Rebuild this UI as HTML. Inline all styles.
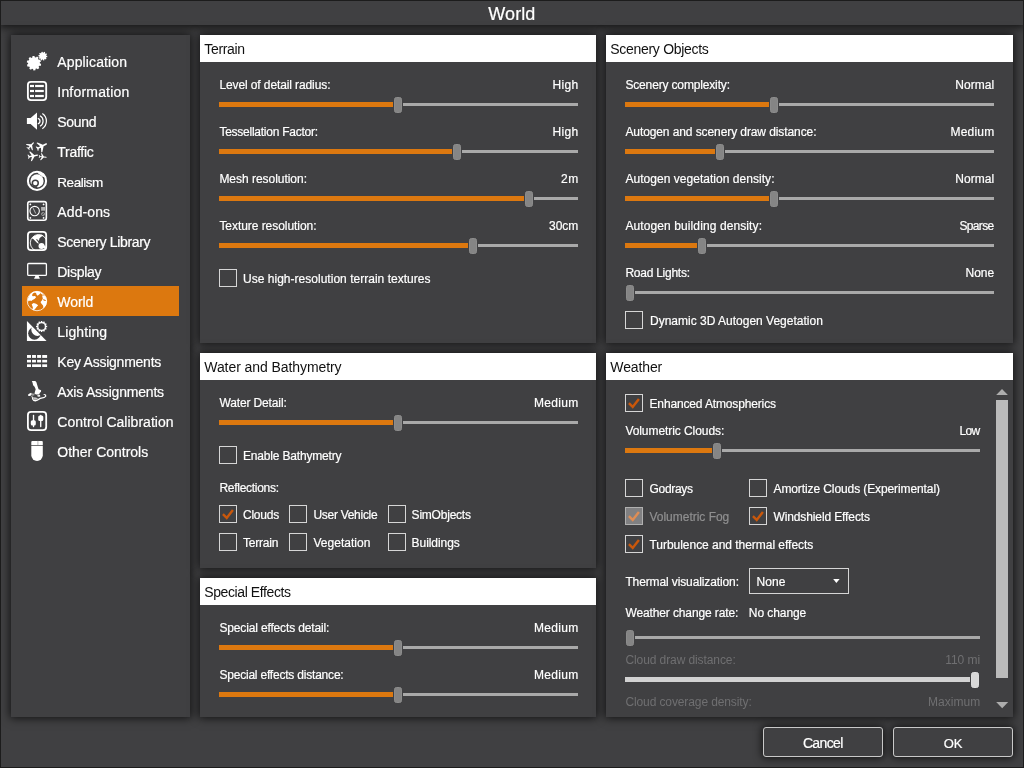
<!DOCTYPE html>
<html><head><meta charset="utf-8"><title>World</title><style>
html,body{margin:0;padding:0;background:#404042;overflow:hidden}
body{width:1024px;height:768px;position:relative;font-family:"Liberation Sans",sans-serif}
#win{position:absolute;left:0;top:0;width:1024px;height:768px;box-sizing:border-box;border:1px solid #1c1c1c;pointer-events:none;z-index:50}
.titlebar{position:absolute;left:1px;top:1px;width:1022px;height:24px;background:#404042;box-shadow:0 0 10px 2px rgba(0,0,0,.75)}
.panel{position:absolute;background:#404042;box-shadow:0 0 9px 1px rgba(0,0,0,.75)}
.hdr{position:absolute;left:0;top:0;right:0;height:27px;background:#fff}
#txt{position:absolute;left:0;top:0;width:1024px;height:768px;will-change:transform}
.t{position:absolute;white-space:pre;-webkit-text-stroke:0.2px currentColor}
.btn{position:absolute;width:120px;height:30px;box-sizing:border-box;border:1px solid #c9c9c9;border-radius:3px;background:#404042;box-shadow:0 0 9px 1px rgba(0,0,0,.72)}
</style></head><body>
<div class="titlebar"></div>
<div class="panel" style="left:11px;top:35px;width:179px;height:682px"></div>
<div style="position:absolute;left:22px;top:286px;width:157px;height:30px;background:#dc780f"></div>
<div class="panel" style="left:200px;top:35px;width:396px;height:308px"><div class="hdr"></div></div>
<div style="position:absolute;left:219px;top:102.0px;width:174px;height:5px;background:#dc780f"></div>
<div style="position:absolute;left:403px;top:103.0px;width:175px;height:3px;background:#a9a9a9"></div>
<div style="position:absolute;left:394px;top:97.0px;width:8px;height:16px;box-sizing:border-box;background:#858585;border:1px solid #8c8c8c;border-radius:2.5px"></div>
<div style="position:absolute;left:219px;top:149.0px;width:233px;height:5px;background:#dc780f"></div>
<div style="position:absolute;left:462px;top:150.0px;width:116px;height:3px;background:#a9a9a9"></div>
<div style="position:absolute;left:453px;top:144.0px;width:8px;height:16px;box-sizing:border-box;background:#858585;border:1px solid #8c8c8c;border-radius:2.5px"></div>
<div style="position:absolute;left:219px;top:196.0px;width:305px;height:5px;background:#dc780f"></div>
<div style="position:absolute;left:534px;top:197.0px;width:44px;height:3px;background:#a9a9a9"></div>
<div style="position:absolute;left:525px;top:191.0px;width:8px;height:16px;box-sizing:border-box;background:#858585;border:1px solid #8c8c8c;border-radius:2.5px"></div>
<div style="position:absolute;left:219px;top:243.0px;width:249px;height:5px;background:#dc780f"></div>
<div style="position:absolute;left:478px;top:244.0px;width:100px;height:3px;background:#a9a9a9"></div>
<div style="position:absolute;left:469px;top:238.0px;width:8px;height:16px;box-sizing:border-box;background:#858585;border:1px solid #8c8c8c;border-radius:2.5px"></div>
<div style="position:absolute;left:219px;top:269px;width:18px;height:18px;box-sizing:border-box;border:1px solid #d6d6d6;background:transparent"></div>
<div class="panel" style="left:200px;top:353px;width:396px;height:215px"><div class="hdr"></div></div>
<div style="position:absolute;left:219px;top:420.0px;width:174px;height:5px;background:#dc780f"></div>
<div style="position:absolute;left:403px;top:421.0px;width:175px;height:3px;background:#a9a9a9"></div>
<div style="position:absolute;left:394px;top:415.0px;width:8px;height:16px;box-sizing:border-box;background:#858585;border:1px solid #8c8c8c;border-radius:2.5px"></div>
<div style="position:absolute;left:219px;top:446px;width:18px;height:18px;box-sizing:border-box;border:1px solid #d6d6d6;background:transparent"></div>
<div style="position:absolute;left:219px;top:505px;width:18px;height:18px;box-sizing:border-box;border:1px solid #d6d6d6;background:transparent"><svg width="16" height="16" viewBox="1 1 16 16" style="position:absolute;left:0;top:0"><path d="M3.9 9.2 L7.7 12.9 L13.9 4.9" fill="none" stroke="#c9570b" stroke-width="2.45" stroke-linejoin="miter"/></svg></div>
<div style="position:absolute;left:289px;top:505px;width:18px;height:18px;box-sizing:border-box;border:1px solid #d6d6d6;background:transparent"></div>
<div style="position:absolute;left:388px;top:505px;width:18px;height:18px;box-sizing:border-box;border:1px solid #d6d6d6;background:transparent"></div>
<div style="position:absolute;left:219px;top:533px;width:18px;height:18px;box-sizing:border-box;border:1px solid #d6d6d6;background:transparent"></div>
<div style="position:absolute;left:289px;top:533px;width:18px;height:18px;box-sizing:border-box;border:1px solid #d6d6d6;background:transparent"></div>
<div style="position:absolute;left:388px;top:533px;width:18px;height:18px;box-sizing:border-box;border:1px solid #d6d6d6;background:transparent"></div>
<div class="panel" style="left:200px;top:578px;width:396px;height:139px"><div class="hdr"></div></div>
<div style="position:absolute;left:219px;top:645.0px;width:174px;height:5px;background:#dc780f"></div>
<div style="position:absolute;left:403px;top:646.0px;width:175px;height:3px;background:#a9a9a9"></div>
<div style="position:absolute;left:394px;top:640.0px;width:8px;height:16px;box-sizing:border-box;background:#858585;border:1px solid #8c8c8c;border-radius:2.5px"></div>
<div style="position:absolute;left:219px;top:692.0px;width:174px;height:5px;background:#dc780f"></div>
<div style="position:absolute;left:403px;top:693.0px;width:175px;height:3px;background:#a9a9a9"></div>
<div style="position:absolute;left:394px;top:687.0px;width:8px;height:16px;box-sizing:border-box;background:#858585;border:1px solid #8c8c8c;border-radius:2.5px"></div>
<div class="panel" style="left:606px;top:35px;width:407px;height:308px"><div class="hdr"></div></div>
<div style="position:absolute;left:625px;top:102.0px;width:144px;height:5px;background:#dc780f"></div>
<div style="position:absolute;left:779px;top:103.0px;width:215px;height:3px;background:#a9a9a9"></div>
<div style="position:absolute;left:770px;top:97.0px;width:8px;height:16px;box-sizing:border-box;background:#858585;border:1px solid #8c8c8c;border-radius:2.5px"></div>
<div style="position:absolute;left:625px;top:149.0px;width:90px;height:5px;background:#dc780f"></div>
<div style="position:absolute;left:725px;top:150.0px;width:269px;height:3px;background:#a9a9a9"></div>
<div style="position:absolute;left:716px;top:144.0px;width:8px;height:16px;box-sizing:border-box;background:#858585;border:1px solid #8c8c8c;border-radius:2.5px"></div>
<div style="position:absolute;left:625px;top:196.0px;width:144px;height:5px;background:#dc780f"></div>
<div style="position:absolute;left:779px;top:197.0px;width:215px;height:3px;background:#a9a9a9"></div>
<div style="position:absolute;left:770px;top:191.0px;width:8px;height:16px;box-sizing:border-box;background:#858585;border:1px solid #8c8c8c;border-radius:2.5px"></div>
<div style="position:absolute;left:625px;top:243.0px;width:72px;height:5px;background:#dc780f"></div>
<div style="position:absolute;left:707px;top:244.0px;width:287px;height:3px;background:#a9a9a9"></div>
<div style="position:absolute;left:698px;top:238.0px;width:8px;height:16px;box-sizing:border-box;background:#858585;border:1px solid #8c8c8c;border-radius:2.5px"></div>
<div style="position:absolute;left:635px;top:291.0px;width:359px;height:3px;background:#a9a9a9"></div>
<div style="position:absolute;left:626px;top:285.0px;width:8px;height:16px;box-sizing:border-box;background:#858585;border:1px solid #8c8c8c;border-radius:2.5px"></div>
<div style="position:absolute;left:625px;top:311px;width:18px;height:18px;box-sizing:border-box;border:1px solid #d6d6d6;background:transparent"></div>
<div class="panel" style="left:606px;top:353px;width:407px;height:364px"><div class="hdr"></div></div>
<div style="position:absolute;left:625px;top:394px;width:18px;height:18px;box-sizing:border-box;border:1px solid #d6d6d6;background:transparent"><svg width="16" height="16" viewBox="1 1 16 16" style="position:absolute;left:0;top:0"><path d="M3.9 9.2 L7.7 12.9 L13.9 4.9" fill="none" stroke="#c9570b" stroke-width="2.45" stroke-linejoin="miter"/></svg></div>
<div style="position:absolute;left:625px;top:448.0px;width:87px;height:5px;background:#dc780f"></div>
<div style="position:absolute;left:722px;top:449.0px;width:258px;height:3px;background:#a9a9a9"></div>
<div style="position:absolute;left:713px;top:443.0px;width:8px;height:16px;box-sizing:border-box;background:#858585;border:1px solid #8c8c8c;border-radius:2.5px"></div>
<div style="position:absolute;left:625px;top:479px;width:18px;height:18px;box-sizing:border-box;border:1px solid #d6d6d6;background:transparent"></div>
<div style="position:absolute;left:749px;top:479px;width:18px;height:18px;box-sizing:border-box;border:1px solid #d6d6d6;background:transparent"></div>
<div style="position:absolute;left:625px;top:507px;width:18px;height:18px;box-sizing:border-box;border:1px solid #b0b0b0;background:#808082"><svg width="16" height="16" viewBox="1 1 16 16" style="position:absolute;left:0;top:0"><path d="M3.9 9.2 L7.7 12.9 L13.9 4.9" fill="none" stroke="#de8d55" stroke-width="2.45" stroke-linejoin="miter"/></svg></div>
<div style="position:absolute;left:749px;top:507px;width:18px;height:18px;box-sizing:border-box;border:1px solid #d6d6d6;background:transparent"><svg width="16" height="16" viewBox="1 1 16 16" style="position:absolute;left:0;top:0"><path d="M3.9 9.2 L7.7 12.9 L13.9 4.9" fill="none" stroke="#c9570b" stroke-width="2.45" stroke-linejoin="miter"/></svg></div>
<div style="position:absolute;left:625px;top:535px;width:18px;height:18px;box-sizing:border-box;border:1px solid #d6d6d6;background:transparent"><svg width="16" height="16" viewBox="1 1 16 16" style="position:absolute;left:0;top:0"><path d="M3.9 9.2 L7.7 12.9 L13.9 4.9" fill="none" stroke="#c9570b" stroke-width="2.45" stroke-linejoin="miter"/></svg></div>
<div style="position:absolute;left:749px;top:568px;width:100px;height:26px;box-sizing:border-box;border:1px solid #d6d6d6"></div>
<svg style="position:absolute;left:833px;top:579px" width="7" height="4" viewBox="0 0 7 4"><path d="M0.2 0H6.6L3.4 4Z" fill="#fff"/></svg>
<div style="position:absolute;left:635px;top:636.0px;width:345px;height:3px;background:#a9a9a9"></div>
<div style="position:absolute;left:626px;top:630.0px;width:8px;height:16px;box-sizing:border-box;background:#858585;border:1px solid #8c8c8c;border-radius:2.5px"></div>
<div style="position:absolute;left:625px;top:677.0px;width:345px;height:5px;background:#d2d2d2"></div>
<div style="position:absolute;left:971px;top:672.0px;width:8px;height:16px;box-sizing:border-box;background:#d8d8d8;border:1px solid #dddddd;border-radius:2.5px"></div>
<div style="position:absolute;left:996px;top:400px;width:12px;height:278px;background:#bbbbbb"></div>
<svg style="position:absolute;left:996px;top:389px" width="12" height="7" viewBox="0 0 12 7"><path d="M0.2 6L6 0L11.9 6Z" fill="#adadad"/></svg>
<svg style="position:absolute;left:996px;top:702px" width="13" height="7" viewBox="0 0 13 7"><path d="M0.2 0L6.2 6.2L12.2 0Z" fill="#adadad"/></svg>
<div class="btn" style="left:763px;top:727px"></div>
<div class="btn" style="left:893px;top:727px"></div>
<svg style="position:absolute;left:0;top:0" width="200" height="480" viewBox="0 0 200 480"><path d="M39.85 63.36 L41.15 63.96 L40.66 65.89 L39.23 65.79 L38.59 66.79 L39.30 68.04 L37.77 69.31 L36.67 68.39 L35.57 68.82 L35.41 70.25 L33.41 70.38 L33.07 68.98 L31.92 68.69 L30.95 69.75 L29.27 68.68 L29.81 67.35 L29.05 66.44 L27.65 66.73 L26.91 64.87 L28.13 64.12 L28.05 62.94 L26.75 62.34 L27.24 60.41 L28.67 60.51 L29.31 59.51 L28.60 58.26 L30.13 56.99 L31.23 57.91 L32.33 57.48 L32.49 56.05 L34.49 55.92 L34.83 57.32 L35.98 57.61 L36.95 56.55 L38.63 57.62 L38.09 58.95 L38.85 59.86 L40.25 59.57 L40.99 61.43 L39.77 62.18Z" fill="#ffffff"/>
<path d="M46.33 55.70 L47.30 55.93 L47.17 57.15 L46.18 57.18 L45.90 57.82 L46.55 58.58 L45.73 59.49 L44.91 58.93 L44.30 59.28 L44.39 60.28 L43.19 60.54 L42.85 59.60 L42.15 59.53 L41.64 60.38 L40.51 59.89 L40.79 58.93 L40.27 58.47 L39.35 58.85 L38.73 57.79 L39.52 57.18 L39.37 56.50 L38.40 56.27 L38.53 55.05 L39.52 55.02 L39.80 54.38 L39.15 53.62 L39.97 52.71 L40.79 53.27 L41.40 52.92 L41.31 51.92 L42.51 51.66 L42.85 52.60 L43.55 52.67 L44.06 51.82 L45.19 52.31 L44.91 53.27 L45.43 53.73 L46.35 53.35 L46.97 54.41 L46.18 55.02Z" fill="#ffffff" stroke="#404042" stroke-width="0.7" paint-order="stroke"/>
<rect x="27.9" y="81.8" width="18.3" height="18.3" rx="3.0" fill="none" stroke="#ffffff" stroke-width="1.85"/>
<rect x="30" y="84.9" width="4" height="2.2" fill="#ffffff"/>
<rect x="35.1" y="84.9" width="8.7" height="2.2" fill="#ffffff"/>
<rect x="30" y="89.9" width="4" height="2.2" fill="#ffffff"/>
<rect x="35.1" y="89.9" width="8.7" height="2.2" fill="#ffffff"/>
<rect x="30" y="94.9" width="4" height="2.2" fill="#ffffff"/>
<rect x="35.1" y="94.9" width="8.7" height="2.2" fill="#ffffff"/>
<path d="M26.90 118.00 L30.60 118.00 L37.00 112.40 L37.00 129.70 L30.60 124.10 L26.90 124.10Z" fill="#ffffff" />
<path d="M37.78 118.31 A2.8 2.8 0 0 1 37.78 123.79" fill="none" stroke="#ffffff" stroke-width="1.3"/>
<path d="M39.97 115.84 A5.9 5.9 0 0 1 39.97 126.26" fill="none" stroke="#ffffff" stroke-width="1.2"/>
<path d="M42.34 113.42 A9.2 9.2 0 0 1 42.34 128.68" fill="none" stroke="#ffffff" stroke-width="1.2"/>
<path d="M33.84 142.33 L33.81 143.25 L32.11 145.26 L32.84 149.72 L32.20 150.44 L30.58 146.97 L29.30 148.19 L29.56 149.84 L29.21 150.24 L28.13 148.67 L26.46 147.76 L26.82 147.37 L28.49 147.46 L29.58 146.07 L25.95 144.82 L26.60 144.10 L31.11 144.37 L32.94 142.46Z" fill="#ffffff" />
<path d="M47.08 143.61 L46.60 144.69 L43.60 146.33 L42.37 151.96 L41.26 152.53 L40.96 147.68 L38.86 148.57 L38.39 150.66 L37.78 150.97 L37.23 148.63 L35.66 146.81 L36.27 146.50 L38.23 147.35 L40.19 146.17 L36.45 143.08 L37.56 142.51 L42.83 144.82 L45.93 143.37Z" fill="#ffffff" />
<path d="M38.32 155.00 L37.62 155.82 L34.57 156.46 L32.00 161.09 L30.88 161.29 L31.90 156.92 L29.83 157.14 L28.86 158.85 L28.25 158.96 L28.39 156.75 L27.50 154.72 L28.11 154.61 L29.61 155.89 L31.63 155.38 L29.17 151.63 L30.30 151.44 L34.29 154.91 L37.38 154.47Z" fill="#ffffff" />
<path d="M46.77 157.38 L46.09 157.79 L43.76 157.57 L40.93 160.18 L40.07 160.08 L41.75 157.32 L40.21 157.03 L39.15 157.99 L38.69 157.93 L39.26 156.45 L39.06 154.88 L39.53 154.93 L40.32 156.13 L41.88 156.21 L40.93 153.13 L41.78 153.24 L43.90 156.46 L46.21 156.81Z" fill="#ffffff" />
<circle cx="37" cy="180.9" r="9.1" fill="none" stroke="#ffffff" stroke-width="2.1"/>
<circle cx="37.0" cy="180.95" r="6.6" fill="#ffffff"/>
<path d="M37.58 171.49 L43.44 173.25 L45.98 177.16 L42.66 176.77 L38.16 173.45Z" fill="#ffffff" />
<circle cx="35.3" cy="183.1" r="2.95" fill="none" stroke="#404042" stroke-width="1.5"/>
<path d="M29.57 183.41 L31.33 185.75 L32.89 187.31 L37.38 188.48 L37.19 186.34 L32.89 185.95 L31.52 183.80Z" fill="#404042" />
<rect x="27.75" y="201.6" width="18.6" height="18.6" rx="2.2" fill="none" stroke="#ffffff" stroke-width="1.6"/>
<path d="M29.25 204.4 L30.35 203.3 L31.450000000000003 204.4 L30.35 205.5Z" fill="#ffffff"/>
<path d="M42.5 204.4 L43.6 203.3 L44.7 204.4 L43.6 205.5Z" fill="#ffffff"/>
<path d="M29.25 217.9 L30.35 216.8 L31.450000000000003 217.9 L30.35 219.0Z" fill="#ffffff"/>
<path d="M42.5 217.9 L43.6 216.8 L44.7 217.9 L43.6 219.0Z" fill="#ffffff"/>
<circle cx="34.65" cy="211.05" r="4.7" fill="none" stroke="#ffffff" stroke-width="1.05"/>
<path d="M33.2 208.2 L35.7 213.5" stroke="#c8c8c8" stroke-width="0.9" fill="none"/>
<rect x="41.1" y="207" width="3.9" height="3.7" fill="#b4b4b4"/>
<circle cx="43.05" cy="214.05" r="1.55" fill="none" stroke="#a8a8a8" stroke-width="0.8"/>
<path d="M42.1 213.2 L44 214.9" stroke="#a0a0a0" stroke-width="0.7" fill="none"/>
<clipPath id="slc"><rect x="28" y="232" width="18" height="18" rx="2"/></clipPath>
<g clip-path="url(#slc)">
<circle cx="38.6" cy="242.9" r="8.3" fill="none" stroke="#ffffff" stroke-width="0.9"/>
<path d="M31.72 238.33 L34.06 235.98 L37.58 234.42 L41.88 234.81 L43.44 235.40 L41.29 236.77 L39.53 238.13 L38.95 240.67 L37.77 240.28 L36.99 238.72 L36.21 239.70 L37.38 241.06 L38.36 242.62 L38.75 243.80 L37.19 243.02 L35.23 241.06 L33.28 239.11Z" fill="#ffffff" />
<circle cx="41.5" cy="245.9" r="3.0" fill="#ffffff"/>
<circle cx="44.3" cy="246.9" r="1.3" fill="#ffffff"/>
</g>
<rect x="27.9" y="231.8" width="18.3" height="18.3" rx="3.2" fill="none" stroke="#ffffff" stroke-width="1.8"/>
<rect x="27.7" y="263.5" width="18.7" height="11.9" rx="1.0" fill="none" stroke="#ffffff" stroke-width="1.3"/>
<path d="M35.40 276.00 L38.70 276.00 L39.90 278.80 L34.00 278.80Z" fill="#ffffff" />
<circle cx="37" cy="301.05" r="9.7" fill="none" stroke="#ffffff" stroke-width="0.8"/>
<clipPath id="wc"><circle cx="37" cy="301.05" r="10"/></clipPath><g clip-path="url(#wc)">
<path d="M27.81 298.89 L28.79 296.55 L30.55 293.81 L32.89 291.86 L35.62 291.08 L39.14 291.27 L41.09 292.25 L39.53 294.20 L37.58 295.77 L36.60 294.79 L36.02 293.03 L34.65 292.45 L32.89 293.62 L31.91 295.18 L32.89 296.23 L35.04 295.96 L36.09 297.13 L34.45 298.89 L32.50 300.06 L31.33 301.04 L29.96 300.45 L28.40 301.43Z" fill="#ffffff" />
<path d="M31.72 304.36 L33.67 302.99 L36.02 303.77 L38.16 305.34 L36.60 307.09 L35.04 309.05 L33.67 310.22 L32.50 309.44 L32.89 307.29 L32.11 305.53Z" fill="#ffffff" />
<path d="M42.46 295.18 L44.22 295.38 L45.78 296.94 L46.95 299.28 L47.15 302.41 L46.17 305.14 L44.61 307.29 L43.44 308.27 L43.05 305.53 L41.29 303.58 L40.51 302.02 L41.88 300.45 L42.85 298.50 L42.27 296.55Z" fill="#ffffff" />
<path d="M43.05 299.28 L44.41 299.48 L45.98 300.26 L45.59 301.04 L44.22 300.65 L43.05 300.06Z" fill="#dc780f" />
<path d="M40.31 293.23 L41.88 292.84 L43.44 294.40 L42.46 294.79Z" fill="#ffffff" />
</g>
<path d="M26.95 321.10 L26.95 340.90 L46.60 340.90Z" fill="#ffffff" />
<clipPath id="lt"><path d="M26.95 321.1 L26.95 340.9 L46.6 340.9Z"/></clipPath>
<mask id="lm"><rect x="20" y="315" width="40" height="32" fill="#fff"/><circle cx="37.6" cy="329.6" r="6.3" fill="#000"/></mask>
<g clip-path="url(#lt)"><circle cx="34.45" cy="333.35" r="6.3" fill="#404042" mask="url(#lm)"/></g>
<path d="M46.03 325.70 L47.16 325.86 L47.16 327.14 L46.03 327.30 L45.83 328.02 L46.74 328.72 L46.10 329.84 L45.04 329.40 L44.50 329.94 L44.94 331.00 L43.82 331.64 L43.12 330.73 L42.40 330.93 L42.24 332.06 L40.96 332.06 L40.80 330.93 L40.08 330.73 L39.38 331.64 L38.26 331.00 L38.70 329.94 L38.16 329.40 L37.10 329.84 L36.46 328.72 L37.37 328.02 L37.17 327.30 L36.04 327.14 L36.04 325.86 L37.17 325.70 L37.37 324.98 L36.46 324.28 L37.10 323.16 L38.16 323.60 L38.70 323.06 L38.26 322.00 L39.38 321.36 L40.08 322.27 L40.80 322.07 L40.96 320.94 L42.24 320.94 L42.40 322.07 L43.12 322.27 L43.82 321.36 L44.94 322.00 L44.50 323.06 L45.04 323.60 L46.10 323.16 L46.74 324.28 L45.83 324.98Z M44.800000000000004 326.5 A3.2 3.2 0 1 0 38.4 326.5 A3.2 3.2 0 1 0 44.800000000000004 326.5Z" fill="#ffffff" fill-rule="evenodd"/>
<rect x="27" y="355.0" width="4.00" height="2.90" fill="#ffffff"/>
<rect x="32.05" y="355.0" width="3.90" height="2.90" fill="#ffffff"/>
<rect x="37.1" y="355.0" width="4.00" height="2.90" fill="#ffffff"/>
<rect x="42.2" y="355.0" width="4.90" height="2.90" fill="#ffffff"/>
<rect x="27" y="359.85" width="4.00" height="2.60" fill="#ffffff"/>
<rect x="32.05" y="359.85" width="3.90" height="2.60" fill="#ffffff"/>
<rect x="37.1" y="359.85" width="4.00" height="2.60" fill="#ffffff"/>
<rect x="42.2" y="359.85" width="4.90" height="2.60" fill="#ffffff"/>
<rect x="27" y="364.3" width="4.00" height="2.70" fill="#ffffff"/>
<rect x="32.05" y="364.3" width="9.05" height="2.70" fill="#ffffff"/>
<rect x="42.2" y="364.3" width="4.90" height="2.70" fill="#ffffff"/>
<path d="M31.84 381.10 L35.30 380.92 L36.40 382.37 L37.67 386.38 L38.58 389.30 L41.13 390.21 L40.95 391.85 L39.68 392.95 L39.31 394.41 L36.03 394.48 L34.50 393.75 L34.94 391.85 L35.67 389.30 L34.57 386.75 L33.11 385.29 L32.57 382.74Z" fill="#ffffff" />
<path d="M27.94 394.84 L29.47 393.49 L31.11 392.87 L31.95 394.04 L31.00 395.57 L29.47 396.12 L28.12 395.75Z" fill="#ffffff" />
<path d="M31.84 393.31 L34.39 393.68 L34.57 395.13 L32.75 395.86 L31.47 395.13Z" fill="#9c9c9c" />
<path d="M31.73 396.78 L32.09 399.14 L33.41 400.89 L35.30 401.41 L37.56 400.68 L40.48 399.07 L44.49 397.98 L46.31 396.45 L46.13 394.84 L44.49 393.97 L42.96 393.97 L44.85 395.28 L45.07 396.23 L43.69 396.96 L40.04 397.87 L37.56 399.33 L35.67 400.09 L33.92 399.80 L32.97 398.49 L32.75 397.03Z" fill="#ffffff" />
<path d="M32.97 397.25 L36.03 397.61 L38.04 398.42 L36.21 399.87 L33.92 399.66 L33.11 398.42Z" fill="#c4c4c4" />
<path d="M37.31 395.13 L40.04 395.06 L40.26 396.41 L38.58 396.81 L37.31 396.23Z" fill="#ffffff" />
<path d="M31.11 395.86 L32.38 396.23 L32.75 397.14 L31.73 396.96Z" fill="#dddddd" />
<rect x="27.9" y="411.8" width="18.3" height="18.3" rx="3.2" fill="none" stroke="#ffffff" stroke-width="1.8"/>
<rect x="32.85" y="414.8" width="1.35" height="12.4" rx="0.6" fill="#ffffff"/>
<rect x="40.05" y="414.8" width="1.35" height="12.4" rx="0.6" fill="#ffffff"/>
<rect x="30.8" y="420.3" width="5.0" height="5.1" rx="1.5" fill="#ffffff"/>
<rect x="38.2" y="415.5" width="5.1" height="5.5" rx="1.5" fill="#ffffff"/>
<path d="M31.3 445 L31.3 441.9 Q31.3 440.9 32.3 440.9 L41.8 440.9 Q42.8 440.9 42.8 441.9 L42.8 445Z" fill="#ffffff"/>
<rect x="37.4" y="440.9" width="1.0" height="4.1" fill="#b8b8b8"/>
<path d="M31.3 445.8 L42.8 445.8 L42.8 455.2 A5.75 5.75 0 0 1 31.3 455.2Z" fill="#ffffff"/></svg>
<div id="txt">
<span class="t" style="left:488.30px;top:4.56px;font-size:18px;line-height:18px;color:#ffffff;letter-spacing:0.078px">World</span>
<span class="t" style="left:57.30px;top:55.15px;font-size:14px;line-height:14px;color:#ffffff;letter-spacing:0.120px">Application</span>
<span class="t" style="left:57.30px;top:85.15px;font-size:14px;line-height:14px;color:#ffffff;letter-spacing:0.195px">Information</span>
<span class="t" style="left:57.30px;top:115.15px;font-size:14px;line-height:14px;color:#ffffff;letter-spacing:-0.296px">Sound</span>
<span class="t" style="left:57.30px;top:145.15px;font-size:14px;line-height:14px;color:#ffffff;letter-spacing:-0.271px">Traffic</span>
<span class="t" style="left:57.30px;top:175.57px;font-size:13.5px;line-height:13.5px;color:#ffffff;letter-spacing:-0.461px">Realism</span>
<span class="t" style="left:57.30px;top:205.15px;font-size:14px;line-height:14px;color:#ffffff;letter-spacing:0.107px">Add-ons</span>
<span class="t" style="left:57.30px;top:235.15px;font-size:14px;line-height:14px;color:#ffffff;letter-spacing:-0.339px">Scenery Library</span>
<span class="t" style="left:57.30px;top:265.15px;font-size:14px;line-height:14px;color:#ffffff;letter-spacing:-0.284px">Display</span>
<span class="t" style="left:57.30px;top:295.15px;font-size:14px;line-height:14px;color:#ffffff;letter-spacing:-0.053px">World</span>
<span class="t" style="left:57.30px;top:325.15px;font-size:14px;line-height:14px;color:#ffffff;letter-spacing:0.108px">Lighting</span>
<span class="t" style="left:57.30px;top:355.15px;font-size:14px;line-height:14px;color:#ffffff;letter-spacing:-0.242px">Key Assignments</span>
<span class="t" style="left:57.30px;top:385.15px;font-size:14px;line-height:14px;color:#ffffff;letter-spacing:-0.195px">Axis Assignments</span>
<span class="t" style="left:57.30px;top:415.15px;font-size:14px;line-height:14px;color:#ffffff;letter-spacing:0.014px">Control Calibration</span>
<span class="t" style="left:57.30px;top:445.15px;font-size:14px;line-height:14px;color:#ffffff;letter-spacing:-0.011px">Other Controls</span>
<span class="t" style="-webkit-text-stroke:0;left:204.30px;top:42.15px;font-size:14px;line-height:14px;color:#111111;letter-spacing:-0.349px">Terrain</span>
<span class="t" style="left:219.40px;top:78.84px;font-size:12px;line-height:12px;color:#ffffff;letter-spacing:-0.105px">Level of detail radius:</span>
<span class="t" style="left:552.60px;top:78.84px;font-size:12px;line-height:12px;color:#ffffff;letter-spacing:0.304px">High</span>
<span class="t" style="left:219.40px;top:125.84px;font-size:12px;line-height:12px;color:#ffffff;letter-spacing:-0.252px">Tessellation Factor:</span>
<span class="t" style="left:552.60px;top:125.84px;font-size:12px;line-height:12px;color:#ffffff;letter-spacing:0.304px">High</span>
<span class="t" style="left:219.40px;top:172.84px;font-size:12px;line-height:12px;color:#ffffff;letter-spacing:-0.030px">Mesh resolution:</span>
<span class="t" style="left:561.00px;top:172.84px;font-size:12px;line-height:12px;color:#ffffff;letter-spacing:0.528px">2m</span>
<span class="t" style="left:219.40px;top:219.84px;font-size:12px;line-height:12px;color:#ffffff;letter-spacing:-0.053px">Texture resolution:</span>
<span class="t" style="left:549.00px;top:219.84px;font-size:12px;line-height:12px;color:#ffffff;letter-spacing:-0.048px">30cm</span>
<span class="t" style="left:243.00px;top:272.84px;font-size:12px;line-height:12px;color:#ffffff;letter-spacing:0.021px">Use high-resolution terrain textures</span>
<span class="t" style="-webkit-text-stroke:0;left:204.30px;top:360.15px;font-size:14px;line-height:14px;color:#111111;letter-spacing:-0.077px">Water and Bathymetry</span>
<span class="t" style="left:219.40px;top:396.84px;font-size:12px;line-height:12px;color:#ffffff;letter-spacing:-0.126px">Water Detail:</span>
<span class="t" style="left:534.00px;top:396.84px;font-size:12px;line-height:12px;color:#ffffff;letter-spacing:0.303px">Medium</span>
<span class="t" style="left:243.00px;top:449.84px;font-size:12px;line-height:12px;color:#ffffff;letter-spacing:-0.174px">Enable Bathymetry</span>
<span class="t" style="left:219.40px;top:481.84px;font-size:12px;line-height:12px;color:#ffffff;letter-spacing:-0.273px">Reflections:</span>
<span class="t" style="left:243.00px;top:508.84px;font-size:12px;line-height:12px;color:#ffffff;letter-spacing:-0.232px">Clouds</span>
<span class="t" style="left:313.40px;top:508.84px;font-size:12px;line-height:12px;color:#ffffff;letter-spacing:-0.280px">User Vehicle</span>
<span class="t" style="left:411.60px;top:508.84px;font-size:12px;line-height:12px;color:#ffffff;letter-spacing:-0.218px">SimObjects</span>
<span class="t" style="left:243.00px;top:536.84px;font-size:12px;line-height:12px;color:#ffffff;letter-spacing:-0.215px">Terrain</span>
<span class="t" style="left:313.40px;top:536.84px;font-size:12px;line-height:12px;color:#ffffff;letter-spacing:0.031px">Vegetation</span>
<span class="t" style="left:411.60px;top:536.84px;font-size:12px;line-height:12px;color:#ffffff;letter-spacing:-0.063px">Buildings</span>
<span class="t" style="-webkit-text-stroke:0;left:204.30px;top:585.15px;font-size:14px;line-height:14px;color:#111111;letter-spacing:-0.404px">Special Effects</span>
<span class="t" style="left:219.40px;top:621.84px;font-size:12px;line-height:12px;color:#ffffff;letter-spacing:-0.149px">Special effects detail:</span>
<span class="t" style="left:534.00px;top:621.84px;font-size:12px;line-height:12px;color:#ffffff;letter-spacing:0.303px">Medium</span>
<span class="t" style="left:219.40px;top:668.84px;font-size:12px;line-height:12px;color:#ffffff;letter-spacing:-0.204px">Special effects distance:</span>
<span class="t" style="left:534.00px;top:668.84px;font-size:12px;line-height:12px;color:#ffffff;letter-spacing:0.303px">Medium</span>
<span class="t" style="-webkit-text-stroke:0;left:610.30px;top:42.15px;font-size:14px;line-height:14px;color:#111111;letter-spacing:-0.301px">Scenery Objects</span>
<span class="t" style="left:625.40px;top:78.84px;font-size:12px;line-height:12px;color:#ffffff;letter-spacing:-0.154px">Scenery complexity:</span>
<span class="t" style="left:955.20px;top:78.84px;font-size:12px;line-height:12px;color:#ffffff;letter-spacing:0.066px">Normal</span>
<span class="t" style="left:625.40px;top:125.84px;font-size:12px;line-height:12px;color:#ffffff;letter-spacing:-0.092px">Autogen and scenery draw distance:</span>
<span class="t" style="left:950.50px;top:125.84px;font-size:12px;line-height:12px;color:#ffffff;letter-spacing:0.203px">Medium</span>
<span class="t" style="left:625.40px;top:172.84px;font-size:12px;line-height:12px;color:#ffffff;letter-spacing:0.038px">Autogen vegetation density:</span>
<span class="t" style="left:955.20px;top:172.84px;font-size:12px;line-height:12px;color:#ffffff;letter-spacing:0.066px">Normal</span>
<span class="t" style="left:625.40px;top:219.84px;font-size:12px;line-height:12px;color:#ffffff;letter-spacing:0.104px">Autogen building density:</span>
<span class="t" style="left:959.50px;top:219.84px;font-size:12px;line-height:12px;color:#ffffff;letter-spacing:-0.666px">Sparse</span>
<span class="t" style="left:625.40px;top:266.84px;font-size:12px;line-height:12px;color:#ffffff;letter-spacing:-0.254px">Road Lights:</span>
<span class="t" style="left:965.50px;top:266.84px;font-size:12px;line-height:12px;color:#ffffff;letter-spacing:0.004px">None</span>
<span class="t" style="left:650.00px;top:314.84px;font-size:12px;line-height:12px;color:#ffffff;letter-spacing:0.001px">Dynamic 3D Autogen Vegetation</span>
<span class="t" style="-webkit-text-stroke:0;left:610.30px;top:360.15px;font-size:14px;line-height:14px;color:#111111;letter-spacing:-0.112px">Weather</span>
<span class="t" style="left:649.50px;top:397.84px;font-size:12px;line-height:12px;color:#ffffff;letter-spacing:-0.146px">Enhanced Atmospherics</span>
<span class="t" style="left:625.40px;top:424.84px;font-size:12px;line-height:12px;color:#ffffff;letter-spacing:-0.067px">Volumetric Clouds:</span>
<span class="t" style="left:959.50px;top:424.84px;font-size:12px;line-height:12px;color:#ffffff;letter-spacing:-0.658px">Low</span>
<span class="t" style="left:649.50px;top:482.84px;font-size:12px;line-height:12px;color:#ffffff;letter-spacing:-0.310px">Godrays</span>
<span class="t" style="left:773.50px;top:482.84px;font-size:12px;line-height:12px;color:#ffffff;letter-spacing:-0.100px">Amortize Clouds (Experimental)</span>
<span class="t" style="left:649.50px;top:510.84px;font-size:12px;line-height:12px;color:#8f8f90;letter-spacing:-0.019px">Volumetric Fog</span>
<span class="t" style="left:773.50px;top:510.84px;font-size:12px;line-height:12px;color:#ffffff;letter-spacing:-0.118px">Windshield Effects</span>
<span class="t" style="left:649.50px;top:538.84px;font-size:12px;line-height:12px;color:#ffffff;letter-spacing:-0.033px">Turbulence and thermal effects</span>
<span class="t" style="left:625.40px;top:575.84px;font-size:12px;line-height:12px;color:#ffffff;letter-spacing:-0.117px">Thermal visualization:</span>
<span class="t" style="left:756.50px;top:575.84px;font-size:12px;line-height:12px;color:#ffffff;letter-spacing:0.104px">None</span>
<span class="t" style="left:625.40px;top:606.84px;font-size:12px;line-height:12px;color:#ffffff;letter-spacing:-0.120px">Weather change rate:</span>
<span class="t" style="left:748.80px;top:606.84px;font-size:12px;line-height:12px;color:#ffffff;letter-spacing:-0.068px">No change</span>
<span class="t" style="-webkit-text-stroke:0;left:625.40px;top:653.84px;font-size:12px;line-height:12px;color:#6f6f71;letter-spacing:-0.088px">Cloud draw distance:</span>
<span class="t" style="-webkit-text-stroke:0;left:945.20px;top:653.84px;font-size:12px;line-height:12px;color:#6f6f71;letter-spacing:-0.028px">110 mi</span>
<span class="t" style="-webkit-text-stroke:0;left:625.40px;top:695.84px;font-size:12px;line-height:12px;color:#6f6f71;letter-spacing:-0.107px">Cloud coverage density:</span>
<span class="t" style="-webkit-text-stroke:0;left:928.10px;top:695.84px;font-size:12px;line-height:12px;color:#6f6f71;letter-spacing:0.031px">Maximum</span>
<span class="t" style="left:802.90px;top:736.15px;font-size:14px;line-height:14px;color:#ffffff;letter-spacing:-0.639px">Cancel</span>
<span class="t" style="left:943.80px;top:737.00px;font-size:13px;line-height:13px;color:#ffffff;letter-spacing:-0.197px">OK</span>
</div>
<div id="win"></div>
</body></html>
